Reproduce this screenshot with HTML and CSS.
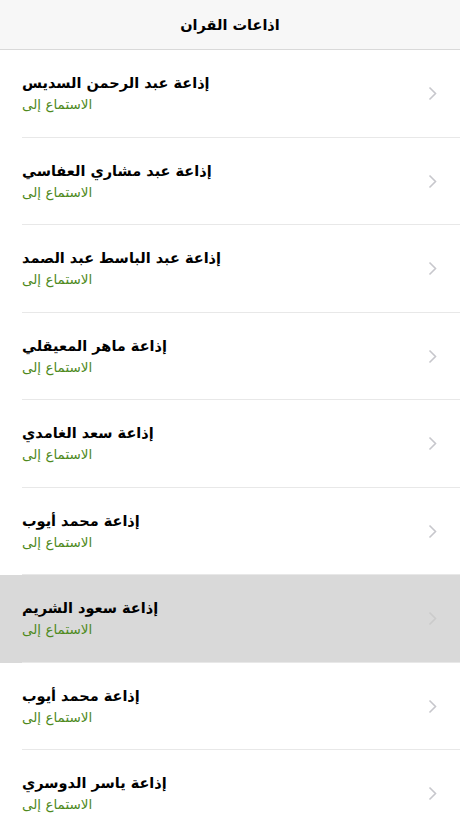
FILE: index.html
```html
<!DOCTYPE html>
<html lang="ar">
<head>
    <meta charset="UTF-8">
    <meta name="viewport" content="width=device-width, initial-scale=1.0">
    <title>اذاعات القران</title>
    <link rel="stylesheet" href="styles.css">
</head>
<body>
    <div class="navbar">
        <h1>اذاعات القران</h1>
    </div>

    <div class="station-list">
        <div class="station">
            <div class="station-text">
                <p class="station-name">إذاعة عبد الرحمن السديس</p>
                <p class="station-sub">الاستماع إلى</p>
            </div>
            <svg class="chevron" viewBox="0 0 9 15"><path d="M1.5 1.5 L7.5 7.5 L1.5 13.5"/></svg>
        </div>
        <div class="station">
            <div class="station-text">
                <p class="station-name">إذاعة عبد مشاري العفاسي</p>
                <p class="station-sub">الاستماع إلى</p>
            </div>
            <svg class="chevron" viewBox="0 0 9 15"><path d="M1.5 1.5 L7.5 7.5 L1.5 13.5"/></svg>
        </div>
        <div class="station">
            <div class="station-text">
                <p class="station-name">إذاعة عبد الباسط عبد الصمد</p>
                <p class="station-sub">الاستماع إلى</p>
            </div>
            <svg class="chevron" viewBox="0 0 9 15"><path d="M1.5 1.5 L7.5 7.5 L1.5 13.5"/></svg>
        </div>
        <div class="station">
            <div class="station-text">
                <p class="station-name">إذاعة ماهر المعيقلي</p>
                <p class="station-sub">الاستماع إلى</p>
            </div>
            <svg class="chevron" viewBox="0 0 9 15"><path d="M1.5 1.5 L7.5 7.5 L1.5 13.5"/></svg>
        </div>
        <div class="station">
            <div class="station-text">
                <p class="station-name">إذاعة سعد الغامدي</p>
                <p class="station-sub">الاستماع إلى</p>
            </div>
            <svg class="chevron" viewBox="0 0 9 15"><path d="M1.5 1.5 L7.5 7.5 L1.5 13.5"/></svg>
        </div>
        <div class="station">
            <div class="station-text">
                <p class="station-name">إذاعة محمد أيوب</p>
                <p class="station-sub">الاستماع إلى</p>
            </div>
            <svg class="chevron" viewBox="0 0 9 15"><path d="M1.5 1.5 L7.5 7.5 L1.5 13.5"/></svg>
        </div>
        <div class="station selected">
            <div class="station-text">
                <p class="station-name">إذاعة سعود الشريم</p>
                <p class="station-sub">الاستماع إلى</p>
            </div>
            <svg class="chevron" viewBox="0 0 9 15"><path d="M1.5 1.5 L7.5 7.5 L1.5 13.5"/></svg>
        </div>
        <div class="station">
            <div class="station-text">
                <p class="station-name">إذاعة محمد أيوب</p>
                <p class="station-sub">الاستماع إلى</p>
            </div>
            <svg class="chevron" viewBox="0 0 9 15"><path d="M1.5 1.5 L7.5 7.5 L1.5 13.5"/></svg>
        </div>
        <div class="station">
            <div class="station-text">
                <p class="station-name">إذاعة ياسر الدوسري</p>
                <p class="station-sub">الاستماع إلى</p>
            </div>
            <svg class="chevron" viewBox="0 0 9 15"><path d="M1.5 1.5 L7.5 7.5 L1.5 13.5"/></svg>
        </div>
    </div>
</body>
</html>
```

FILE: styles.css
```css
body {
    margin: 0;
    font-family: 'DejaVu Sans', 'Noto Sans', sans-serif;
    background-color: #ffffff;
    color: #000000;
    overflow: hidden;
}
.navbar {
    height: 49px;
    background-color: #f7f7f7;
    border-bottom: 1px solid #d9d9d9;
    display: flex;
    align-items: center;
    justify-content: center;
}
.navbar h1 {
    margin: 0;
    font-size: 14.5px;
    font-weight: bold;
}
.station {
    position: relative;
    height: 87.5px;
    display: flex;
    align-items: center;
    justify-content: space-between;
    padding: 0 22px;
}
.station::after {
    content: "";
    position: absolute;
    left: 22px;
    right: 0;
    bottom: 0;
    height: 1px;
    background-color: #e8e8e8;
}
.station.selected {
    background-color: #d9d9d9;
}
.station-text p {
    margin: 0;
    text-align: left;
}
.station-name {
    font-size: 14.5px;
    font-weight: bold;
    line-height: 22px;
}
.station-sub {
    font-size: 13.5px;
    color: #4f8a1e;
    line-height: 21px;
}
.chevron {
    width: 9px;
    height: 15px;
    margin-right: 1px;
    fill: none;
    stroke: #c7c7cc;
    stroke-width: 1.6;
}
.selected .chevron {
    stroke: #cbcbcb;
}
```
